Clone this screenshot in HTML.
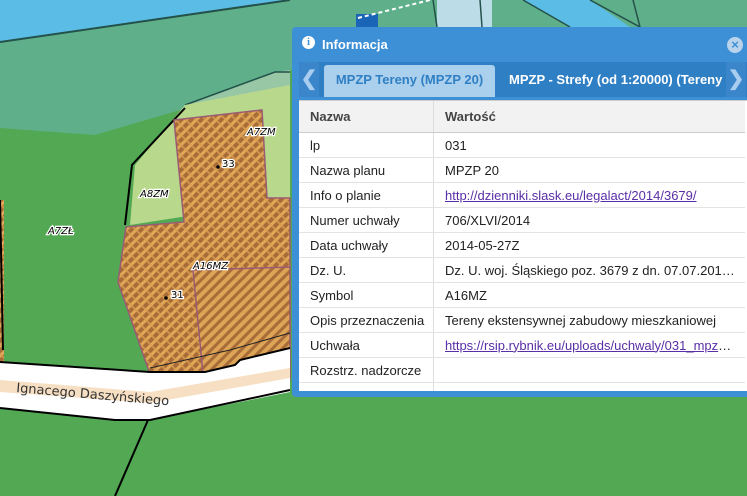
<!DOCTYPE html>
<html><head><meta charset="utf-8"><style>
html,body{margin:0;padding:0;width:747px;height:496px;overflow:hidden;font-family:"Liberation Sans",Arial,sans-serif;}
#map{position:absolute;left:0;top:0}
#panel{position:absolute;left:292px;top:27px;width:460px;height:370px;background:#3d8fd6;border-radius:4px 0 0 4px;}
#hdr{position:absolute;left:0;top:0;height:35px;width:100%;color:#fff;font-weight:bold;font-size:13px;}
#hdr .t{position:absolute;left:30px;top:10px}
#hdr .i{position:absolute;left:10px;top:9px;width:13px;height:13px;border-radius:50%;background:#fff;color:#3d8fd6;font:bold 10px/13px "Liberation Serif",serif;text-align:center}
#hdr .x{position:absolute;left:435px;top:10px;width:16px;height:16px;border-radius:50%;background:#b9d3ec;color:#3d8fd6;font:bold 13px/16px "Liberation Sans",sans-serif;text-align:center}
#tabs{position:absolute;left:7px;top:35px;width:448px;height:35px;background:#2f7fc4;}
.arr{position:absolute;top:0;width:20px;height:35px;background:#3b86cb;color:#a9cdef;font-size:20px;line-height:35px;text-align:center;font-weight:bold}
.tab{position:absolute;top:3px;height:32px;line-height:30px;font-size:13px;font-weight:bold;white-space:nowrap}
#tbl{position:absolute;left:7px;top:73px;width:448px;height:290px;background:#fff;overflow:hidden;border-top:1px solid #ccc}
table{border-collapse:collapse;width:446px;font-size:13px;color:#222}
td,th{height:24px;border-bottom:1px solid #e3e3e3;padding:0 0 0 11px;text-align:left;white-space:nowrap}
th{height:31px;background:#f2f2f2;font-weight:bold;color:#444;border-bottom:1px solid #ccc}
td:first-child,th:first-child{width:123px;border-right:1px solid #ddd}
a{color:#5a2ea6;text-decoration:underline}
</style></head><body>
<svg id="map" width="747" height="496" viewBox="0 0 747 496">
<defs>
<pattern id="cross" width="10" height="10" patternUnits="userSpaceOnUse">
<rect width="10" height="10" fill="#a86c38"/>
<path d="M-2,8 L8,-2 M3,13 L13,3" stroke="#e0a857" stroke-width="3"/>
<path d="M-2,2 L8,12 M3,-3 L13,7" stroke="#d99c50" stroke-width="2" opacity=".8"/>
</pattern>
<pattern id="diag" width="10" height="10" patternUnits="userSpaceOnUse">
<rect width="10" height="10" fill="#a86c38"/>
<path d="M-2,8 L8,-2 M3,13 L13,3" stroke="#dda456" stroke-width="4"/>
</pattern>
</defs>
<rect width="747" height="496" fill="#52a853"/>
<path d="M0,0 H747 V30 L0,45 Z" fill="#5bbde6"/>
<path d="M0,42 L290,0 H747 V120 L290,70 L180,110 L95,135 L0,128 Z" fill="#5fb08a"/>
<path d="M0,42 L290,0" stroke="#24524a" stroke-width="2"/>
<rect x="437" y="0" width="55" height="27" fill="#bcdce8"/>
<path d="M523,0 L570,27 H630 L590,0 Z" fill="#5bbde6"/>
<path d="M290,70 L275,72 L185,105 L180,112 L290,110 Z" fill="#97c7a5"/>
<path d="M185,105 L275,72 L290,72" stroke="#24524a" stroke-width="1.5" fill="none"/>
<path d="M185,105 L290,85 L290,200 L130,225 L135,165 Z" fill="#b8d88c"/>
<path d="M185,108 L132,165 L125,225" stroke="#000" stroke-width="2" fill="none"/>
<path d="M174,120 L262,110 L267,198 L290,198 L290,380 L153,383 L118,282 L126,227 L184,222 Z" fill="url(#cross)" stroke="#9a5a73" stroke-width="1.5"/>
<path d="M193,270 L290,267 L290,376 L203,374 Z" fill="url(#diag)" stroke="#9a5a73" stroke-width="1.5"/>
<path d="M0,200 L4,200 L4,380 L0,380 Z" fill="url(#cross)"/>
<path d="M0,200 L3,350" stroke="#000" stroke-width="2"/>
<path d="M0,362 L150,372 L205,372 L235,365 L240,360 L290,348 V392 L150,420 L115,420 L0,408 Z" fill="#fff"/>
<path d="M0,380 L150,392 L290,368 V378 L150,403 L0,392 Z" fill="#f6dfc2"/>
<path d="M0,362 L150,372 L205,372 L235,365 L240,360 L290,348" stroke="#000" stroke-width="2" fill="none"/>
<path d="M0,408 L115,420 L150,420 L290,390" stroke="#000" stroke-width="2" fill="none"/>
<path d="M150,368 L230,350 L290,333" stroke="#222" stroke-width="1" fill="none"/>
<path d="M148,420 L115,496" stroke="#000" stroke-width="2"/>
<text x="16" y="392" transform="rotate(5 16 392)" font-size="13" fill="#333" font-family="DejaVu Sans, sans-serif">Ignacego Daszyńskiego</text>
<g font-family="DejaVu Sans, sans-serif" font-size="10" font-style="italic" fill="#000" stroke="#fff" stroke-width="2.5" paint-order="stroke">
<text x="247" y="135">A7ZM</text><text x="140" y="197">A8ZM</text><text x="48" y="234">A7ZŁ</text><text x="193" y="269">A16MZ</text>
<text x="222" y="167" font-style="normal">33</text><text x="171" y="298" font-style="normal">31</text>
</g>
<circle cx="218" cy="167" r="1.8" fill="#000"/><circle cx="166" cy="298" r="1.8" fill="#000"/>
<rect x="356" y="14" width="22" height="14" fill="#1b65b8"/>
<path d="M358,18 L430,0" stroke="#fff" stroke-width="2" stroke-dasharray="4 3"/>
<path d="M433,0 L437,27 M480,0 L482,27 M523,0 L570,27 M590,0 L640,27 M633,0 L640,27" stroke="#24524a" stroke-width="1.5"/>
</svg>
<div id="panel">
<div id="hdr"><span class="i">i</span><span class="t">Informacja</span><span class="x">×</span></div>
<div id="tabs">
<div class="arr" style="left:0">❮</div>
<div class="tab" style="left:25px;width:171px;background:#abd0ee;color:#2f7fc4;text-align:center;border-radius:3px 3px 0 0">MPZP Tereny (MPZP 20)</div>
<div class="tab" style="left:210px;color:#fff">MPZP - Strefy (od 1:20000) (Tereny</div>
<div class="arr" style="left:427px">❯</div>
</div>
<div id="tbl"><table>
<tr><th>Nazwa</th><th>Wartość</th></tr>
<tr><td>lp</td><td>031</td></tr>
<tr><td>Nazwa planu</td><td>MPZP 20</td></tr>
<tr><td>Info o planie</td><td><a>http://dzienniki.slask.eu/legalact/2014/3679/</a></td></tr>
<tr><td>Numer uchwały</td><td>706/XLVI/2014</td></tr>
<tr><td>Data uchwały</td><td>2014-05-27Z</td></tr>
<tr><td>Dz. U.</td><td>Dz. U. woj. Śląskiego poz. 3679 z dn. 07.07.201…</td></tr>
<tr><td>Symbol</td><td>A16MZ</td></tr>
<tr><td>Opis przeznaczenia</td><td>Tereny ekstensywnej zabudowy mieszkaniowej</td></tr>
<tr><td>Uchwała</td><td><a>https://rsip.rybnik.eu/uploads/uchwaly/031_mpz</a>…</td></tr>
<tr><td>Rozstrz. nadzorcze</td><td></td></tr>
<tr><td></td><td></td></tr>
</table></div>
</div>
</body></html>
